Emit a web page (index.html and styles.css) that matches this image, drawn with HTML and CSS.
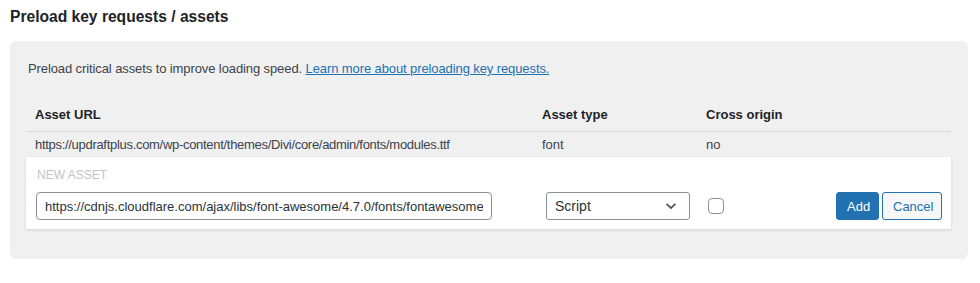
FILE: index.html
```html
<!DOCTYPE html>
<html lang="en">
<head>
  <meta charset="UTF-8" />
  <title>Preload key requests / assets</title>
  <link rel="stylesheet" href="styles.css">
</head>
<body>

<h2 class="section-title">Preload key requests / assets</h2>

<div class="preload-panel">
  <p class="intro">Preload critical assets to improve loading speed. <a href="#">Learn more about preloading key requests.</a></p>

  <table class="asset-table">
    <thead>
      <tr>
        <th class="col-url">Asset URL</th>
        <th class="col-type">Asset type</th>
        <th class="col-cross">Cross origin</th>
      </tr>
    </thead>
    <tbody>
      <tr>
        <td class="asset-url">https://updraftplus.com/wp-content/themes/Divi/core/admin/fonts/modules.ttf</td>
        <td>font</td>
        <td>no</td>
      </tr>
    </tbody>
  </table>

  <!-- form for adding a new asset -->
  <div class="new-asset">
    <div class="new-asset-label">New asset</div>
    <div class="new-asset-row">
      <input class="url-input" type="text" value="https://cdnjs.cloudflare.com/ajax/libs/font-awesome/4.7.0/fonts/fontawesome-webfont.woff2">
      <div class="select-wrap">
        <span>Script</span>
        <svg width="12" height="8" viewBox="0 0 12 8"><path d="M1.5 1.8 L6 6 L10.5 1.8" fill="none" stroke="#50575e" stroke-width="1.8"/></svg>
      </div>
      <span class="checkbox"></span>
      <div class="buttons">
        <button class="btn btn-primary">Add</button>
        <button class="btn btn-secondary">Cancel</button>
      </div>
    </div>
  </div>
</div>

</body>
</html>
```

FILE: styles.css
```css
body {
  margin: 0;
  padding: 0 12px 0 10px;
  background: #fff;
  font-family: 'Liberation Sans', Arial, sans-serif;
  color: #3c434a;
  font-size: 13px;
}

.section-title {
  margin: 7px 0 14px;
  font-size: 15.6px;
  line-height: 20px;
  font-weight: 600;
  color: #1d2327;
}

.preload-panel {
  background: #f0f0f1;
  border-radius: 6px;
  padding: 18px 17px 30px 16px;
}

.intro {
  margin: 0 0 20px 2px;
  line-height: 20px;
  letter-spacing: -0.1px;
}

.intro a {
  color: #2271b1;
}

.asset-table {
  width: 100%;
  border-collapse: collapse;
}

.asset-table th {
  text-align: left;
  font-weight: 600;
  color: #1d2327;
  padding: 8px 9px;
  line-height: 16px;
  border-bottom: 1px solid #dcdcde;
}

.asset-table td {
  padding: 5px 9px;
  line-height: 15px;
}

.asset-table .asset-url {
  letter-spacing: -0.3px;
}

.col-url {
  width: 489px;
}

.col-type {
  width: 146px;
}

.new-asset {
  background: #fff;
  padding: 11px 9px 9px 10px;
  box-shadow: 0 1px 3px rgba(0, 0, 0, 0.12);
}

.new-asset-label {
  text-transform: uppercase;
  font-size: 12px;
  line-height: 14px;
  color: #c3c4c7;
  margin: 0 0 10px 1px;
}

.new-asset-row {
  display: flex;
  align-items: center;
}

.url-input {
  box-sizing: border-box;
  width: 456px;
  height: 28px;
  border: 1px solid #8c8f94;
  border-radius: 4px;
  padding: 0 8px;
  font: inherit;
  font-size: 13px;
  color: #2c3338;
}

.select-wrap {
  box-sizing: border-box;
  width: 144px;
  height: 28px;
  margin-left: 54px;
  border: 1px solid #8c8f94;
  border-radius: 3px;
  padding: 0 12px 0 8px;
  display: flex;
  align-items: center;
  justify-content: space-between;
  font-size: 14px;
  color: #2c3338;
}

.checkbox {
  box-sizing: border-box;
  width: 16px;
  height: 16px;
  margin-left: 18px;
  border: 1px solid #8c8f94;
  border-radius: 4px;
}

.buttons {
  margin-left: auto;
  display: flex;
  gap: 3px;
}

.btn {
  height: 28px;
  border-radius: 3px;
  font: inherit;
  font-size: 13px;
  padding: 0 10px;
}

.btn-primary {
  background: #2271b1;
  border: 1px solid #2271b1;
  color: #fff;
  width: 43px;
}

.btn-secondary {
  background: #f6f7f7;
  border: 1px solid #2271b1;
  color: #2271b1;
  width: 60px;
}
```
